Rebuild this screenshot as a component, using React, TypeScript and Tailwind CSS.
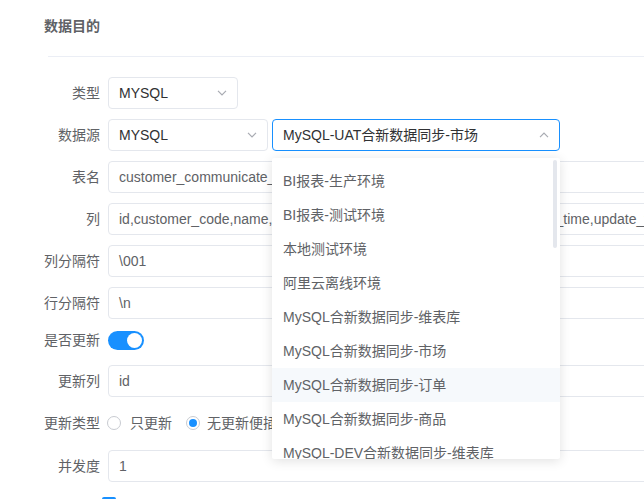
import React from "react";

const FONT = { fontFamily: '"Liberation Sans", "Noto Sans CJK SC", Arial, sans-serif' };

function Chevron({ up = false }: { up?: boolean }) {
  return (
    <svg width="10" height="6" viewBox="0 0 10 6" className="shrink-0">
      <path
        d={up ? "M1 5.2 L5 1.2 L9 5.2" : "M1 0.8 L5 4.8 L9 0.8"}
        fill="none"
        stroke="#a8abb2"
        strokeWidth="1.2"
      />
    </svg>
  );
}

function Label({ children }: { children: React.ReactNode }) {
  return (
    <div className="w-[100px] shrink-0 pr-0 text-right text-[14px] text-[#606266]">{children}</div>
  );
}

function TextInput({ value }: { value: string }) {
  return (
    <div className="ml-[8px] flex h-[32px] flex-1 items-center overflow-hidden whitespace-nowrap rounded-[4px] border border-[#e4e7ed] pl-[10px] text-[14px] text-[#606266]">
      {value}
    </div>
  );
}

const options = [
  "BI报表-生产环境",
  "BI报表-测试环境",
  "本地测试环境",
  "阿里云离线环境",
  "MySQL合新数据同步-维表库",
  "MySQL合新数据同步-市场",
  "MySQL合新数据同步-订单",
  "MySQL合新数据同步-商品",
  "MySQL-DEV合新数据同步-维表库",
];

export default function App() {
  return (
    <div className="relative h-[499px] w-[644px] overflow-hidden bg-white" style={FONT}>
      <div className="pl-[44px] pt-[17px]">
        <div className="h-[18px] text-[14px] font-bold leading-[18px] text-[#606266]">数据目的</div>
      </div>
      <div className="ml-[48px] mt-[21px] h-px bg-[#ebeef5]" />

      <div className="mt-[20px] w-[900px]">
        {/* 类型 */}
        <div className="mb-[10px] flex h-[32px] items-center">
          <Label>类型</Label>
          <div className="ml-[8px] flex h-[32px] w-[130px] items-center justify-between rounded-[4px] border border-[#e4e7ed] pl-[10px] pr-[10px] text-[14px] text-[#303133]">
            <span>MYSQL</span>
            <Chevron />
          </div>
        </div>

        {/* 数据源 */}
        <div className="mb-[10px] flex h-[32px] items-center">
          <Label>数据源</Label>
          <div className="ml-[8px] flex h-[32px] w-[160px] items-center justify-between rounded-[4px] border border-[#e4e7ed] pl-[10px] pr-[10px] text-[14px] text-[#303133]">
            <span>MYSQL</span>
            <Chevron />
          </div>
          <div className="relative ml-[4px] w-[288px]">
            <div className="flex h-[32px] items-center justify-between rounded-[4px] border border-[#1890ff] pl-[10px] pr-[10px] text-[14px] text-[#303133]">
              <span>MySQL-UAT合新数据同步-市场</span>
              <Chevron up />
            </div>
            <div className="absolute left-0 top-[39px] z-10 h-[301px] w-[288px] overflow-hidden rounded-[2px] bg-white py-[6px] shadow-[0_2px_12px_rgba(0,0,0,0.12)]">
              {options.map((o, i) => (
                <div
                  key={o}
                  className={
                    "flex h-[34px] items-center whitespace-nowrap pl-[11px] text-[14px] text-[#606266] " +
                    (i === 6 ? "bg-[#f6f9fc]" : "")
                  }
                >
                  {o}
                </div>
              ))}
              <div className="absolute right-[3px] top-[2px] h-[88px] w-[4px] rounded-full bg-[#e4e7ed]" />
            </div>
          </div>
        </div>

        {/* 表名 */}
        <div className="mb-[10px] flex h-[32px] items-center">
          <Label>表名</Label>
          <TextInput value="customer_communicate_record" />
        </div>

        {/* 列 */}
        <div className="mb-[10px] flex h-[32px] items-center">
          <Label>列</Label>
          <TextInput value="id,customer_code,name,customer_id,communicate_type,memo,create_time,update_time" />
        </div>

        {/* 列分隔符 */}
        <div className="mb-[10px] flex h-[32px] items-center">
          <Label>列分隔符</Label>
          <TextInput value="\001" />
        </div>

        {/* 行分隔符 */}
        <div className="mb-[10px] flex h-[32px] items-center">
          <Label>行分隔符</Label>
          <TextInput value="\n" />
        </div>

        {/* 是否更新 */}
        <div className="mb-[14px] flex h-[22px] items-center">
          <Label>是否更新</Label>
          <div className="ml-[8px] flex h-[19px] w-[36px] items-center justify-end rounded-full bg-[#1890ff] pr-[2px]">
            <div className="h-[15px] w-[15px] rounded-full bg-white" />
          </div>
        </div>

        {/* 更新列 */}
        <div className="mb-[10px] flex h-[32px] items-center">
          <Label>更新列</Label>
          <TextInput value="id" />
        </div>

        {/* 更新类型 */}
        <div className="mb-[11px] flex h-[32px] items-center">
          <Label>更新类型</Label>
          <div className="ml-[7px] flex items-center text-[14px] text-[#606266]">
            <span className="h-[14px] w-[14px] rounded-full border border-[#c8cbd1] bg-white" />
            <span className="ml-[9px]">只更新</span>
            <span className="ml-[14px] flex h-[14px] w-[14px] items-center justify-center rounded-full border border-[#c8cbd1] bg-white">
              <span className="h-[8px] w-[8px] rounded-full bg-[#1890ff]" />
            </span>
            <span className="ml-[7px]">无更新便插入</span>
          </div>
        </div>

        {/* 并发度 */}
        <div className="mb-[15px] flex h-[32px] items-center">
          <Label>并发度</Label>
          <TextInput value="1" />
        </div>

        {/* checkbox row */}
        <div className="flex h-[14px] items-start">
          <div className="w-[100px] shrink-0" />
          <div className="ml-[2px] h-[14px] w-[14px] rounded-[2px] bg-[#1890ff]" />
        </div>
      </div>
    </div>
  );
}
